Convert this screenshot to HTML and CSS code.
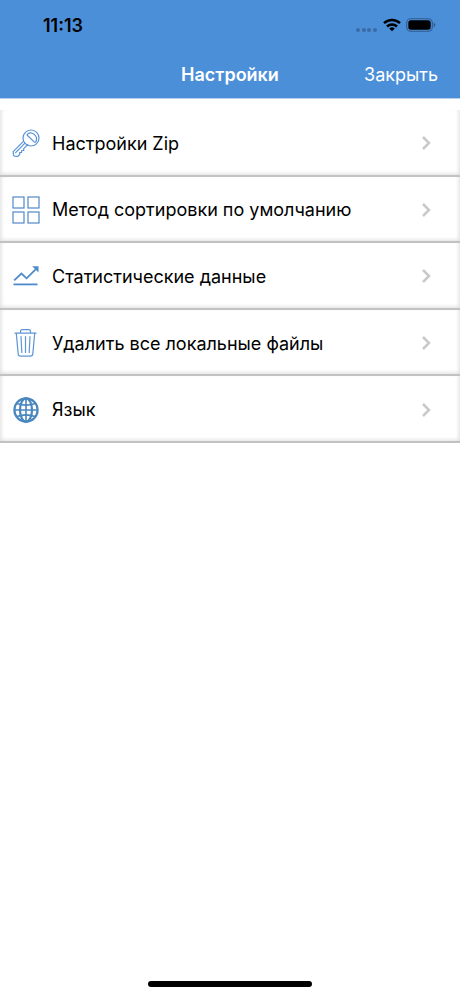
FILE: index.html
```html
<!DOCTYPE html>
<html lang="ru">
	<head>
		<meta charset="UTF-8" />
		<meta name="viewport" content="width=device-width, initial-scale=1.0" />
		<title>Настройки</title>
		<link rel="stylesheet" href="styles.css">
	</head>
	<body>
		<header class="header">
			<div class="status-bar">
				<span class="time">11:13</span>
				<div class="status-icons">
					<svg class="signal" width="22" height="16" viewBox="0 0 22 16" fill="#3a6ba5">
						<circle cx="2" cy="13" r="2" />
						<circle cx="8" cy="13" r="2" />
						<circle cx="13" cy="13" r="2" />
						<circle cx="19" cy="13" r="2" />
					</svg>
					<svg class="wifi" width="18" height="14" viewBox="0 0 18 14" fill="none" stroke="#000" stroke-width="2.5">
						<path d="M1 5.2a11.5 11.5 0 0 1 16 0" />
						<path d="M4 8.5a7.2 7.2 0 0 1 10 0" />
						<path d="M9 13.3L6.2 10.6a4 4 0 0 1 5.6 0z" fill="#000" stroke="none" />
					</svg>
					<svg class="battery" width="30" height="14" viewBox="0 0 30 14">
						<rect x="0.7" y="0.7" width="25.6" height="12.6" rx="4" fill="none" stroke="#315b8c" stroke-width="1.1" />
						<rect x="2.3" y="2.3" width="22.4" height="9.4" rx="2.6" />
						<path d="M27.6 4.6q1.8.9 1.8 2.4t-1.8 2.4z" fill="#315b8c" />
					</svg>
				</div>
			</div>
			<div class="nav-bar">
				<h1>Настройки</h1>
				<button class="close" type="button">Закрыть</button>
			</div>
		</header>

		<main>
			<ul class="menu">
				<li>
					<a class="item" href="#zip">
						<svg class="icon" viewBox="0 0 28 28" fill="none" stroke="#5b93d8" stroke-width="1.2" stroke-linejoin="round" stroke-linecap="round">
							<path d="M11.4 12.4L1.2 22.6l.3 3.6 1 1 3.4.1 1.8-1.7-.1-2 2-.1.1-2 2-.1v-1.8l4.2-4.2" />
							<circle cx="19" cy="9" r="8" />
							<path d="M15.6 5.1q3.2-2.4 6.7.3 3.6 3.4 1.6 7.2-.9 1.2-2 .1l-6.4-6.2q-.8-.8.1-1.4z" />
							<path d="M3.6 23.6l9.4-9.4" />
						</svg>
						<span class="label">Настройки Zip</span>
						<svg class="chevron" viewBox="0 0 10 14"><path d="M2 1l6 6-6 6" /></svg>
					</a>
				</li>
				<li>
					<a class="item" href="#sort">
						<svg class="icon" viewBox="0 0 28 28" fill="none" stroke="#5288c8" stroke-width="1.2">
							<rect x="1" y="1" width="11" height="11" />
							<rect x="16" y="1" width="11" height="11" />
							<rect x="1" y="16" width="11" height="11" />
							<rect x="16" y="16" width="11" height="11" />
						</svg>
						<span class="label">Метод сортировки по умолчанию</span>
						<svg class="chevron" viewBox="0 0 10 14"><path d="M2 1l6 6-6 6" /></svg>
					</a>
				</li>
				<li>
					<a class="item" href="#stats">
						<svg class="icon" viewBox="0 0 28 28" fill="none" stroke="#4f8bcb" stroke-width="1.8">
							<path d="M1.5 22.4h24" />
							<path d="M2.2 18.4l7.2-6.9 5.2 4.8 9-8.9" />
							<path d="M20.2 4.2h6.3v6.2z" fill="#4f8bcb" stroke="none" />
						</svg>
						<span class="label">Статистические данные</span>
						<svg class="chevron" viewBox="0 0 10 14"><path d="M2 1l6 6-6 6" /></svg>
					</a>
				</li>
				<li>
					<a class="item" href="#clear">
						<svg class="icon" viewBox="0 0 28 28" fill="none" stroke="#5d96d6" stroke-width="1.2" stroke-linecap="round" stroke-linejoin="round">
							<path d="M3 4.2h21M8.5 4.2V2.4Q8.5.7 10.2.7h6.6q1.7 0 1.7 1.7v1.8" />
							<path d="M4.3 4.4l1.9 20.5q.2 2.2 2.3 2.2h10q2.1 0 2.3-2.2l1.9-20.5" />
							<path d="M9 7.5l.8 16M13.5 7.5v16M18 7.5l-.8 16" />
						</svg>
						<span class="label">Удалить все локальные файлы</span>
						<svg class="chevron" viewBox="0 0 10 14"><path d="M2 1l6 6-6 6" /></svg>
					</a>
				</li>
				<li>
					<a class="item" href="#language">
						<svg class="icon" viewBox="0 0 28 28" fill="none" stroke="#4a87bf" stroke-width="2.2">
							<circle cx="14" cy="14" r="11.6" />
							<ellipse cx="14" cy="14" rx="6" ry="11.6" />
							<path d="M14 2.4v23.2M2.4 14h23.2" stroke-width="1.6" />
							<path d="M5 7.4q9 3.4 18 0M5 20.6q9-3.4 18 0" stroke-width="1.6" />
						</svg>
						<span class="label">Язык</span>
						<svg class="chevron" viewBox="0 0 10 14"><path d="M2 1l6 6-6 6" /></svg>
					</a>
				</li>
			</ul>
		</main>

		<div class="home-indicator"></div>
	</body>
</html>
```

FILE: styles.css
```css
* {
	box-sizing: border-box;
}
body {
	display: flex;
	flex-direction: column;
	min-height: 100vh;
	margin: 0;
	font-family: Inter, "Liberation Sans", sans-serif;
	background-color: white;
}
.header {
	background-color: #4c8fd9;
	border-bottom: 1px solid #b5d0ef;
}
.status-bar {
	display: flex;
	justify-content: space-between;
	align-items: center;
	height: 50px;
	padding: 0 24px 0 43px;
}
.time {
	font-size: 18px;
	font-weight: 600;
}
.status-icons {
	display: flex;
	align-items: center;
	gap: 5px;
}
.nav-bar {
	display: grid;
	grid-template-columns: 1fr auto 1fr;
	align-items: center;
	height: 48px;
	padding: 0 22px;
	color: white;
}
h1 {
	grid-column: 2;
	margin: 0;
	font-size: 18px;
	font-weight: 600;
}
.close {
	justify-self: end;
	padding: 0;
	border: none;
	background: none;
	color: white;
	font-family: inherit;
	font-size: 18px;
	cursor: pointer;
}
main {
	flex: 1;
}
.menu {
	display: grid;
	grid-auto-rows: 1fr;
	height: 333px;
	margin: 11px 0 0;
	padding: 0;
	list-style: none;
}
.item {
	display: flex;
	align-items: center;
	height: 100%;
	padding: 2px 29px 0 12px;
	border-bottom: 2px solid #c2c2c2;
	box-shadow: inset 4px 0 4px -3px #dddddd, inset -4px 0 4px -3px #dddddd,
		inset 0 -4px 4px -3px #dddddd;
	color: black;
	font-size: 18px;
	text-decoration: none;
}
.icon {
	width: 28px;
	height: 28px;
	margin-right: 12px;
}
.label {
	flex: 1;
}
.chevron {
	width: 10px;
	height: 14px;
	fill: none;
	stroke: #c9c9cc;
	stroke-width: 2.5;
}
.home-indicator {
	width: 164px;
	height: 6px;
	margin: 0 auto 9px;
	border-radius: 3px;
	background-color: black;
}
```
